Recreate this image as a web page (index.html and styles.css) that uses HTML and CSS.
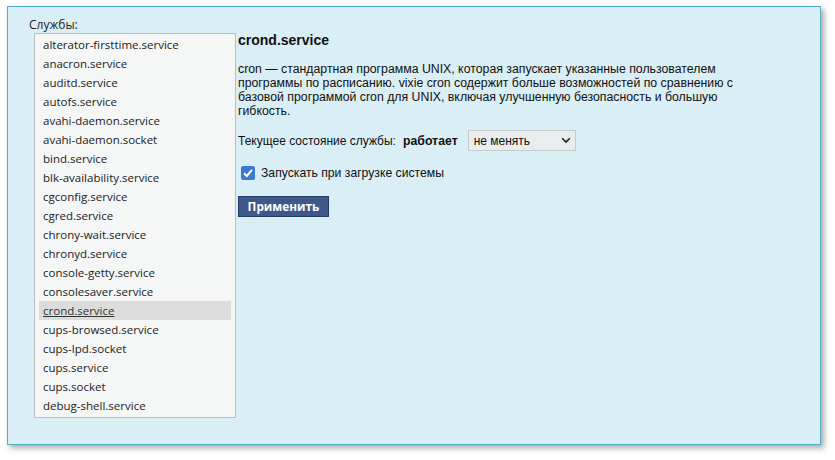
FILE: index.html
```html
<!DOCTYPE html>
<html>
<head>
<meta charset="utf-8">
<link rel="stylesheet" href="styles.css">
</head>
<body>
<div class="panel">
  <div class="left">
    <div class="label">Службы:</div>
    <div class="list">
      <div class="item">alterator-firsttime.service</div>
      <div class="item">anacron.service</div>
      <div class="item">auditd.service</div>
      <div class="item">autofs.service</div>
      <div class="item">avahi-daemon.service</div>
      <div class="item">avahi-daemon.socket</div>
      <div class="item">bind.service</div>
      <div class="item">blk-availability.service</div>
      <div class="item">cgconfig.service</div>
      <div class="item">cgred.service</div>
      <div class="item">chrony-wait.service</div>
      <div class="item">chronyd.service</div>
      <div class="item">console-getty.service</div>
      <div class="item">consolesaver.service</div>
      <div class="item selected"><span class="u">crond.service</span></div>
      <div class="item">cups-browsed.service</div>
      <div class="item">cups-lpd.socket</div>
      <div class="item">cups.service</div>
      <div class="item">cups.socket</div>
      <div class="item">debug-shell.service</div>
    </div>
  </div>
  <div class="right">
    <div class="title">crond.service</div>
    <p class="desc">cron — стандартная программа UNIX, которая запускает указанные пользователем программы по расписанию. vixie cron содержит больше возможностей по сравнению с базовой программой cron для UNIX, включая улучшенную безопасность и большую гибкость.</p>
    <div class="status">
      <span class="status-label">Текущее состояние службы:</span>
      <span class="status-value">работает</span>
      <div class="select">
        <span>не менять</span>
        <svg class="chev" width="10" height="7" viewBox="0 0 10 7"><path d="M1.2 1.2 L5 5 L8.8 1.2" fill="none" stroke="#222" stroke-width="1.6"/></svg>
      </div>
    </div>
    <div class="check-row">
      <span class="checkbox"><svg width="14" height="14" viewBox="0 0 14 14"><path d="M3 7.2 L5.8 10 L11 3.8" fill="none" stroke="#fff" stroke-width="2"/></svg></span>
      <span class="check-label">Запускать при загрузке системы</span>
    </div>
    <div class="btn">Применить</div>
  </div>
</div>
</body>
</html>
```

FILE: styles.css
```css
html, body {
  margin: 0;
  padding: 0;
  background: #ffffff;
}
body {
  width: 835px;
  height: 460px;
  padding: 6px 0 0 7px;
  box-sizing: border-box;
}
.panel {
  width: 814px;
  height: 439px;
  box-sizing: border-box;
  background: #daeef5;
  border: 1px solid #52adc4;
  box-shadow: 3px 3px 6px rgba(0,0,0,0.35);
  display: flex;
  padding: 9px 0 0 21px;
  font-family: "Liberation Sans", Arial, sans-serif;
  color: #111;
}
.left {
  display: flex;
  flex-direction: column;
}
.label {
  font-family: "Open Sans", sans-serif;
  font-size: 12px;
  line-height: 17px;
  color: #222;
}
.list {
  margin-left: 5px;
  width: 202px;
  height: 385px;
  box-sizing: border-box;
  border: 1px solid #b9bdc4;
  background: #f5f6f6;
  padding: 1px 4px;
}
.item {
  height: 19px;
  line-height: 19px;
  padding-left: 4px;
  font-family: "Open Sans", sans-serif;
  font-size: 11.5px;
  color: #222;
  white-space: nowrap;
}
.item.selected {
  background: #dcdcdc;
}
.item .u {
  text-decoration: underline;
  color: #333;
}
.right {
  margin-left: 2px;
  padding-top: 15px;
  width: 500px;
}
.title {
  font-weight: bold;
  font-size: 14px;
  line-height: 18px;
}
.desc {
  margin: 13px 0 0 0;
  font-size: 12.3px;
  line-height: 14px;
}
.status {
  margin-top: 12px;
  display: flex;
  align-items: center;
  font-size: 12px;
}
.status-value {
  font-weight: bold;
  font-size: 12.3px;
  margin-left: 7px;
}
.select {
  margin-left: 10px;
  width: 108px;
  height: 21px;
  box-sizing: border-box;
  background: #e8edef;
  border: 1px solid #c6c9cc;
  display: flex;
  align-items: center;
  justify-content: space-between;
  padding: 0 4px 0 5px;
  font-size: 12px;
}
.check-row {
  margin-top: 15px;
  display: flex;
  align-items: center;
  padding-left: 3px;
  font-size: 12.2px;
}
.checkbox {
  width: 14px;
  height: 14px;
  background: #3b78d8;
  border-radius: 2px;
  display: flex;
}
.check-label {
  margin-left: 6px;
}
.btn {
  margin-top: 16px;
  width: 91px;
  height: 21px;
  box-sizing: border-box;
  background: #3e5889;
  border: 1px solid #243a66;
  color: #fff;
  font-family: "Open Sans", sans-serif;
  font-weight: bold;
  font-size: 11.8px;
  line-height: 19px;
  text-align: center;
}
```
